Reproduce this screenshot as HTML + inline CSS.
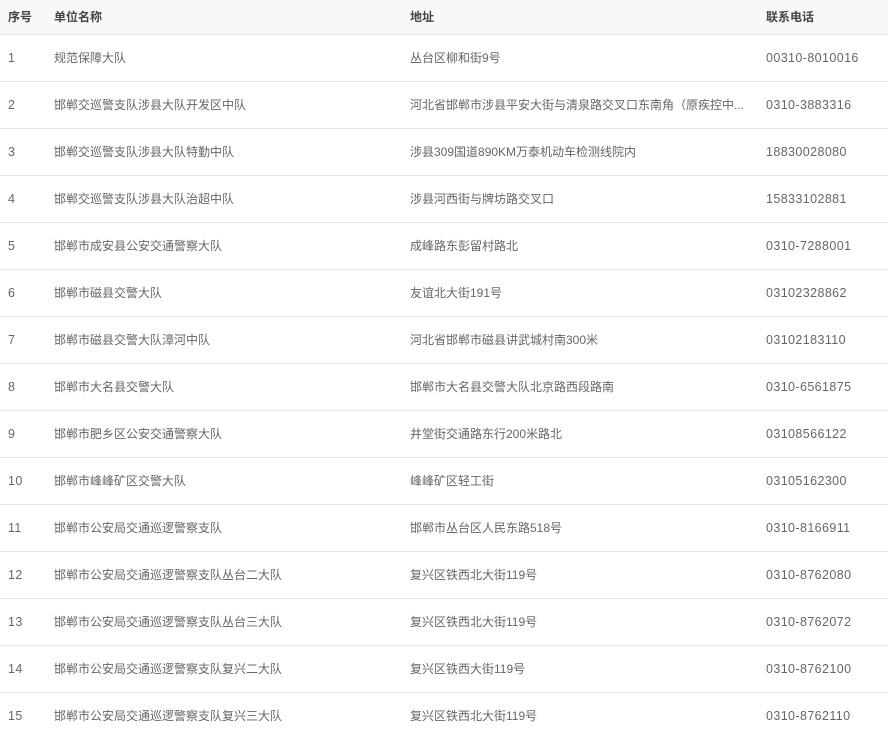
<!DOCTYPE html>
<html><head><meta charset="utf-8"><style>
html,body{margin:0;padding:0;background:#fff;}
table{border-collapse:collapse;width:888px;table-layout:fixed;font-family:"Liberation Sans","Noto Sans CJK SC",sans-serif;font-size:12px;color:#666;}
th{background:#f8f8f8;height:34px;text-align:left;font-weight:bold;color:#444;border-bottom:1px solid #e6e6e6;padding:0 0 0 8px;box-sizing:border-box;}
td{height:47px;border-bottom:1px solid #e6e6e6;padding:0 0 0 8px;box-sizing:border-box;white-space:nowrap;overflow:hidden;}
td:nth-child(4),td:nth-child(1){letter-spacing:0.4px;font-size:12.5px;}
tr:last-child td{border-bottom:none;}
</style></head><body>
<table>
<colgroup><col style="width:46px"><col style="width:356px"><col style="width:356px"><col style="width:130px"></colgroup>
<tr><th>序号</th><th>单位名称</th><th>地址</th><th>联系电话</th></tr>
<tr><td>1</td><td>规范保障大队</td><td>丛台区柳和街9号</td><td>00310-8010016</td></tr>
<tr><td>2</td><td>邯郸交巡警支队涉县大队开发区中队</td><td>河北省邯郸市涉县平安大街与清泉路交叉口东南角（原疾控中...</td><td>0310-3883316</td></tr>
<tr><td>3</td><td>邯郸交巡警支队涉县大队特勤中队</td><td>涉县309国道890KM万泰机动车检测线院内</td><td>18830028080</td></tr>
<tr><td>4</td><td>邯郸交巡警支队涉县大队治超中队</td><td>涉县河西街与牌坊路交叉口</td><td>15833102881</td></tr>
<tr><td>5</td><td>邯郸市成安县公安交通警察大队</td><td>成峰路东彭留村路北</td><td>0310-7288001</td></tr>
<tr><td>6</td><td>邯郸市磁县交警大队</td><td>友谊北大街191号</td><td>03102328862</td></tr>
<tr><td>7</td><td>邯郸市磁县交警大队漳河中队</td><td>河北省邯郸市磁县讲武城村南300米</td><td>03102183110</td></tr>
<tr><td>8</td><td>邯郸市大名县交警大队</td><td>邯郸市大名县交警大队北京路西段路南</td><td>0310-6561875</td></tr>
<tr><td>9</td><td>邯郸市肥乡区公安交通警察大队</td><td>井堂街交通路东行200米路北</td><td>03108566122</td></tr>
<tr><td>10</td><td>邯郸市峰峰矿区交警大队</td><td>峰峰矿区轻工街</td><td>03105162300</td></tr>
<tr><td>11</td><td>邯郸市公安局交通巡逻警察支队</td><td>邯郸市丛台区人民东路518号</td><td>0310-8166911</td></tr>
<tr><td>12</td><td>邯郸市公安局交通巡逻警察支队丛台二大队</td><td>复兴区铁西北大街119号</td><td>0310-8762080</td></tr>
<tr><td>13</td><td>邯郸市公安局交通巡逻警察支队丛台三大队</td><td>复兴区铁西北大街119号</td><td>0310-8762072</td></tr>
<tr><td>14</td><td>邯郸市公安局交通巡逻警察支队复兴二大队</td><td>复兴区铁西大街119号</td><td>0310-8762100</td></tr>
<tr><td>15</td><td>邯郸市公安局交通巡逻警察支队复兴三大队</td><td>复兴区铁西北大街119号</td><td>0310-8762110</td></tr>
</table>
</body></html>
